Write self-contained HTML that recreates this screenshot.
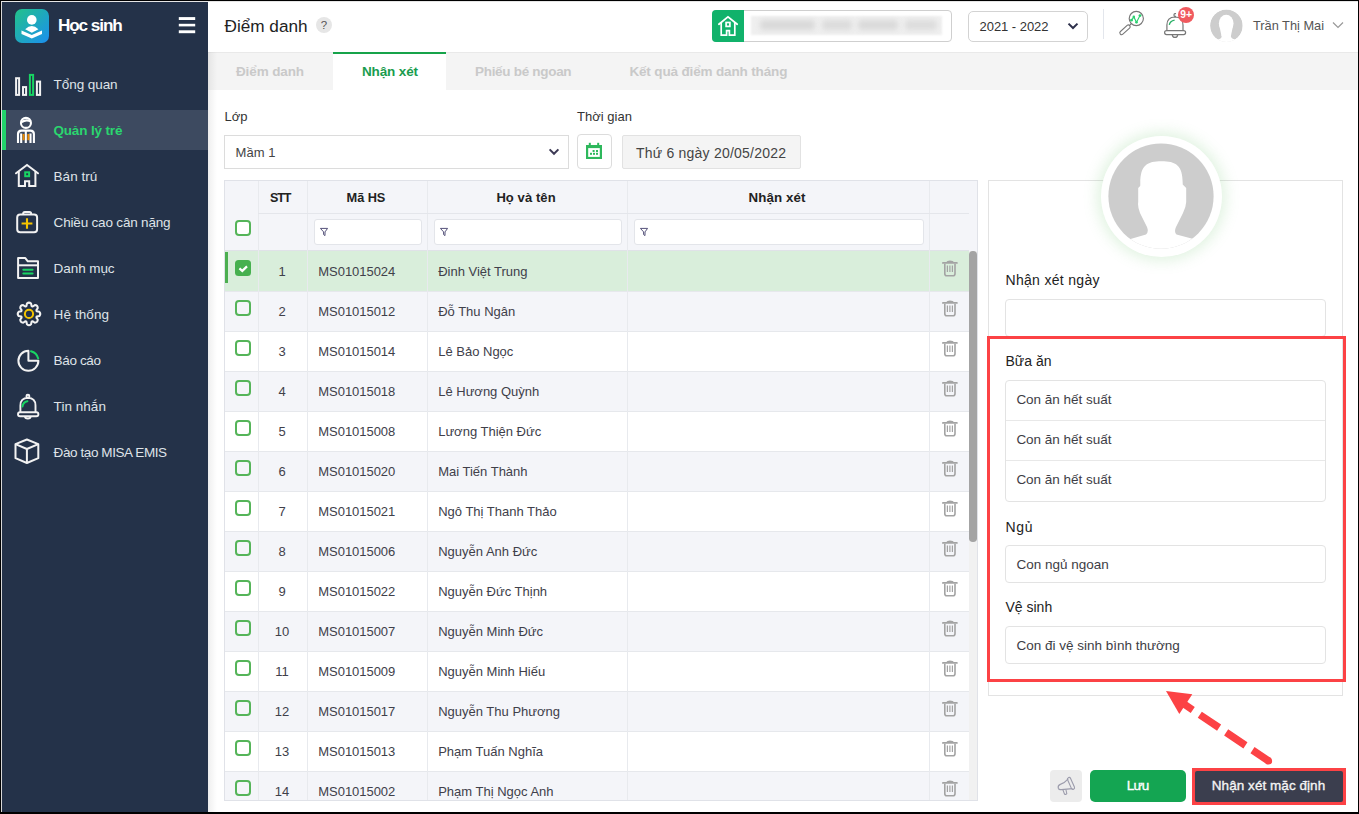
<!DOCTYPE html>
<html><head><meta charset="utf-8">
<style>
*{box-sizing:border-box;margin:0;padding:0}
html,body{width:1359px;height:814px;overflow:hidden;background:#fff;font-family:"Liberation Sans",sans-serif}
.a{position:absolute}
.t{position:absolute;white-space:nowrap;line-height:20px;height:20px}
svg{position:absolute;overflow:visible}
</style></head>
<body>
<div class="a" style="left:0px;top:0px;width:208px;height:814px;background:#243249;"></div>
<svg style="left:14px;top:8px" width="36" height="36" viewBox="0 0 36 36">
<defs><linearGradient id="lg" x1="0" y1="0" x2="1" y2="1">
<stop offset="0" stop-color="#22c28a"/><stop offset="1" stop-color="#1b8ff0"/></linearGradient></defs>
<rect x="1" y="1" width="34" height="34" rx="7" fill="url(#lg)"/>
<circle cx="17.8" cy="11.9" r="4.8" fill="#fff"/>
<path d="M11.2 21.2 Q17.8 14.8 24.4 21.2 L17.8 24.8 Z" fill="#fff"/>
<path d="M7.5 22.5 L17.8 27 L28 22.5 L28 26 L17.8 30.5 L7.5 26 Z" fill="#fff"/>
</svg>
<div class="t" style="left:57.90px;top:14.94px;font-size:17.2px;color:#fff;font-weight:bold;letter-spacing:-1.090px;">Học sinh</div>
<svg style="left:178px;top:16px" width="18" height="20">
<rect x="0.8" y="1.1" width="16.4" height="2.9" fill="#fff"/>
<rect x="0.8" y="7.8" width="16.4" height="2.6" fill="#fff"/>
<rect x="0.8" y="14.3" width="16.4" height="2.9" fill="#fff"/>
</svg>
<div class="a" style="left:2px;top:110px;width:206px;height:40px;background:#3d4a60;"></div>
<div class="a" style="left:2px;top:110px;width:4px;height:40px;background:#22d36b;"></div>
<div class="t" style="left:53.60px;top:74.72px;font-size:13.5px;color:#dfe3e8;letter-spacing:-0.069px;">Tổng quan</div>
<div class="t" style="left:53.40px;top:120.72px;font-size:13.5px;color:#2bd66f;font-weight:bold;letter-spacing:-0.152px;">Quản lý trẻ</div>
<div class="t" style="left:53.60px;top:166.72px;font-size:13.5px;color:#dfe3e8;letter-spacing:0.012px;">Bán trú</div>
<div class="t" style="left:53.60px;top:212.72px;font-size:13.5px;color:#dfe3e8;letter-spacing:-0.182px;">Chiều cao cân nặng</div>
<div class="t" style="left:53.60px;top:258.72px;font-size:13.5px;color:#dfe3e8;letter-spacing:-0.076px;">Danh mục</div>
<div class="t" style="left:53.60px;top:304.72px;font-size:13.5px;color:#dfe3e8;letter-spacing:0.101px;">Hệ thống</div>
<div class="t" style="left:53.60px;top:350.72px;font-size:13.5px;color:#dfe3e8;letter-spacing:-0.356px;">Báo cáo</div>
<div class="t" style="left:53.60px;top:396.72px;font-size:13.5px;color:#dfe3e8;letter-spacing:0.038px;">Tin nhắn</div>
<div class="t" style="left:53.60px;top:442.72px;font-size:13.5px;color:#dfe3e8;letter-spacing:-0.410px;">Đào tạo MISA EMIS</div>
<svg style="left:0;top:0" width="60" height="480" viewBox="0 0 60 480">
<g fill="none" stroke="#f2f2f2" stroke-width="2">
<rect x="16.1" y="78.2" width="3" height="16.7"/>
<rect x="23" y="87.1" width="3.1" height="7.8"/>
<rect x="36.9" y="81.6" width="3.2" height="13.3"/>
</g>
<rect x="29.9" y="74.9" width="3.2" height="20" fill="none" stroke="#18d463" stroke-width="2"/>
<!-- person -->
<g fill="none" stroke="#fff" stroke-width="2.1">
<circle cx="25.95" cy="122.9" r="5"/>
<path d="M21.6 122.3 Q25.5 119.2 30.6 121.2"/>
<path d="M18 143 L18 134 Q18 130.8 21.5 130.6 L30.5 130.6 Q33.9 130.8 33.9 134 L33.9 143"/>
<path d="M21.2 133.5 L21.2 143 M25.8 131 L25.8 143 M30.5 133.5 L30.5 143"/>
</g>
<rect x="22.6" y="134" width="1.9" height="6.2" fill="#f08c00"/>
<rect x="27.4" y="134" width="1.9" height="6.2" fill="#f08c00"/>
<!-- house -->
<g fill="none" stroke="#f2f2f2" stroke-width="2" stroke-linecap="round" stroke-linejoin="miter">
<path d="M16 173.3 L27 165 L38 173.3"/>
<path d="M18.8 171.2 L18.8 186.1 L25 186.1 L25 181.3 L29.2 181.3 L29.2 186.1 L35.4 186.1 L35.4 171.2" stroke-linecap="butt"/>
</g>
<rect x="25.2" y="172.3" width="3.9" height="3.9" fill="none" stroke="#18d463" stroke-width="2"/>
<!-- med kit -->
<g fill="none" stroke="#f2f2f2" stroke-width="2">
<rect x="17.2" y="214.5" width="19.9" height="17.7" rx="3"/>
<path d="M23.2 214.5 L23.2 213.5 Q23.2 211.9 24.8 211.9 L29.5 211.9 Q31.1 211.9 31.1 213.5 L31.1 214.5"/>
</g>
<path d="M21.6 223.5 L32.4 223.5 M27 218.3 L27 228.8" stroke="#f5c400" stroke-width="2.1"/>
<!-- folder -->
<g fill="none" stroke="#f2f2f2" stroke-width="2" stroke-linejoin="round">
<path d="M18.1 258.1 L25.3 258.1 L27.8 261.3 L38 261.3 L38 278 L18.1 278 Z"/>
<path d="M18.1 265.3 L38 265.3"/>
</g>
<path d="M23.3 269.7 L32.6 269.7 M23.3 273.6 L32.6 273.6" stroke="#18d463" stroke-width="2" stroke-linecap="round"/>
<!-- gear -->
<path d="M26.44 306.01 L26.93 303.50 Q29.00 301.70 31.07 303.50 L31.56 306.01 Q31.98 306.69 32.77 306.50 L34.89 305.09 Q37.63 305.27 37.81 308.01 L36.40 310.13 Q36.21 310.92 36.89 311.34 L39.40 311.83 Q41.20 313.90 39.40 315.97 L36.89 316.46 Q36.21 316.88 36.40 317.67 L37.81 319.79 Q37.63 322.53 34.89 322.71 L32.77 321.30 Q31.98 321.11 31.56 321.79 L31.07 324.30 Q29.00 326.10 26.93 324.30 L26.44 321.79 Q26.02 321.11 25.23 321.30 L23.11 322.71 Q20.37 322.53 20.19 319.79 L21.60 317.67 Q21.79 316.88 21.11 316.46 L18.60 315.97 Q16.80 313.90 18.60 311.83 L21.11 311.34 Q21.79 310.92 21.60 310.13 L20.19 308.01 Q20.37 305.27 23.11 305.09 L25.23 306.50 Q26.02 306.69 26.44 306.01 Z" fill="none" stroke="#f2f2f2" stroke-width="2" stroke-linejoin="round"/>
<circle cx="29" cy="313.9" r="4.1" fill="none" stroke="#f5c400" stroke-width="2"/>
<!-- pie -->
<path d="M28.4 350.8 A10 10 0 1 0 38.4 360.8 L28.4 360.8 Z" fill="none" stroke="#f2f2f2" stroke-width="2" stroke-linejoin="round"/>
<path d="M31 351.2 A10 10 0 0 1 38.2 358.4" fill="none" stroke="#18d463" stroke-width="2" stroke-linecap="round"/>
<!-- bell -->
<g fill="none" stroke="#f2f2f2" stroke-width="1.9">
<circle cx="27.9" cy="396.3" r="1.5"/>
<path d="M20.4 412.3 L20.4 405.5 Q20.4 398 27.9 397.9 Q35.5 398 35.5 405.5 L35.5 412.3"/>
<rect x="18" y="412.3" width="20.4" height="4" rx="2"/>
<path d="M25 416.5 Q25 418.5 27.9 418.5 Q30.6 418.5 30.6 416.5"/>
</g>
<path d="M22.5 406.5 Q23 402.3 27.4 401.3" fill="none" stroke="#18d463" stroke-width="2" stroke-linecap="round"/>
<!-- cube -->
<g fill="none" stroke="#f2f2f2" stroke-width="2" stroke-linejoin="round">
<path d="M26.9 439.5 L38.3 444.2 L38.3 458.2 L26.9 463 L15.5 458.2 L15.5 444.2 Z"/>
<path d="M15.5 444.2 L26.9 449 L38.3 444.2 M26.9 449 L26.9 463"/>
</g>
</svg>
<div class="t" style="left:224.60px;top:15.84px;font-size:17.2px;color:#222;letter-spacing:-0.023px;">Điểm danh</div>
<div class="a" style="left:316px;top:17px;width:16px;height:16px;border-radius:50%;background:#e6e6e6;color:#555;font-size:11.5px;line-height:16px;text-align:center">?</div>
<div class="a" style="left:208px;top:52px;width:1150px;height:38px;background:#f4f4f4;"></div>
<div class="a" style="left:208px;top:52px;width:1150px;height:1px;background:#e9e9e9;"></div>
<div class="a" style="left:333px;top:52px;width:113px;height:38px;background:#fff;"></div>
<div class="a" style="left:333px;top:52px;width:113px;height:2px;background:#16a34a;"></div>
<div class="t" style="left:236.00px;top:61.82px;font-size:13.5px;color:#c9c9c9;font-weight:bold;letter-spacing:-0.126px;">Điểm danh</div>
<div class="t" style="left:362.00px;top:61.82px;font-size:13.5px;color:#1a9c4e;font-weight:bold;letter-spacing:-0.145px;">Nhận xét</div>
<div class="t" style="left:475.00px;top:61.82px;font-size:13.5px;color:#c9c9c9;font-weight:bold;letter-spacing:-0.301px;">Phiếu bé ngoan</div>
<div class="t" style="left:629.40px;top:61.82px;font-size:13.5px;color:#c9c9c9;font-weight:bold;letter-spacing:-0.148px;">Kết quả điểm danh tháng</div>
<div class="a" style="left:711.5px;top:10px;width:240.5px;height:31.5px;background:#fff;border:1px solid #cfcfcf;border-radius:4px"></div>
<div class="a" style="left:711.5px;top:10px;width:32px;height:31.5px;background:#11b26b;border-radius:4px 0 0 4px"></div>
<svg style="left:712px;top:10px" width="32" height="32" viewBox="712 10 32 32">
<path d="M718.9 24.3 L728 16.9 L737.2 24.3" fill="none" stroke="#fff" stroke-width="1.8" stroke-linejoin="miter" stroke-linecap="round"/>
<path d="M721.2 22.3 L721.2 35.2 L726.6 35.2 L726.6 30.6 L729.4 30.6 L729.4 35.2 L734.8 35.2 L734.8 22.3" fill="none" stroke="#fff" stroke-width="1.7"/>
<rect x="726.1" y="22.5" width="3.8" height="3.9" fill="none" stroke="#fff" stroke-width="1.7"/>
</svg>
<div class="a" style="left:751px;top:15.5px;width:191px;height:19.5px;background:#efefef;filter:blur(1.2px)"></div>
<div class="a" style="left:760px;top:20px;width:55px;height:10px;background:#d9d9d9;filter:blur(2.5px);border-radius:4px"></div>
<div class="a" style="left:822px;top:20px;width:30px;height:10px;background:#dcdcdc;filter:blur(2.5px);border-radius:4px"></div>
<div class="a" style="left:858px;top:20px;width:40px;height:10px;background:#dadada;filter:blur(2.5px);border-radius:4px"></div>
<div class="a" style="left:905px;top:20px;width:32px;height:10px;background:#dddddd;filter:blur(2.5px);border-radius:4px"></div>
<div class="a" style="left:968px;top:10.5px;width:120px;height:31px;background:#fff;border:1px solid #d3d3d3;border-radius:5px"></div>
<div class="t" style="left:979.50px;top:16.80px;font-size:13px;color:#333;letter-spacing:-0.039px;">2021 - 2022</div>
<svg style="left:1066px;top:21px" width="14" height="10"><path d="M2.5 2.6 L7 7 L11.5 2.6" fill="none" stroke="#2c2f4a" stroke-width="2"/></svg>
<div class="a" style="left:1103px;top:9px;width:1px;height:30px;background:#e3e6ec;"></div>
<svg style="left:1115px;top:8px" width="32" height="30" viewBox="1115 8 32 30">
<circle cx="1136.3" cy="18.5" r="7.1" fill="none" stroke="#777" stroke-width="1.15"/>
<path d="M1131.3 23.6 L1129.4 25.6" stroke="#777" stroke-width="1.3"/>
<rect x="1118.7" y="28" width="12.6" height="3.6" rx="1.8" transform="rotate(-42 1125 29.8)" fill="none" stroke="#777" stroke-width="1.1"/>
<path d="M1131.5 20.2 L1133.8 16.9 L1136.5 22.3 L1140 15.6" fill="none" stroke="#2ad06f" stroke-width="1.1"/>
<circle cx="1131.5" cy="20.2" r="1.4" fill="#2ad06f"/><circle cx="1133.8" cy="16.9" r="1.3" fill="#2ad06f"/>
<circle cx="1136.5" cy="22.3" r="1.3" fill="#2ad06f"/><circle cx="1140" cy="15.6" r="1.4" fill="#2ad06f"/>
</svg>
<svg style="left:1160px;top:8px" width="34" height="32" viewBox="1160 8 34 32">
<path d="M1166.9 30.4 L1166.9 25 Q1166.9 17.2 1175 17 Q1183 17.2 1183 25 L1183 30.4" fill="none" stroke="#777" stroke-width="1.2"/>
<rect x="1164.6" y="30.6" width="21" height="4" rx="2" fill="none" stroke="#777" stroke-width="1.2"/>
<path d="M1172.3 34.6 Q1172.5 37.4 1175 37.4 Q1177.5 37.4 1177.7 34.6" fill="none" stroke="#777" stroke-width="1.2"/>
<path d="M1176 13.6 Q1174 13.3 1174 15 Q1174 16.6 1176 16.4" fill="none" stroke="#777" stroke-width="1.2"/>
<path d="M1169.3 24.8 Q1170 21 1174.6 20.1" fill="none" stroke="#2ab067" stroke-width="1.3"/>
</svg>
<div class="a" style="left:1178px;top:7px;width:16px;height:16px;border-radius:50%;background:#f05a5f"></div>
<div class="t" style="left:1180.33px;top:4.63px;font-size:10.3px;color:#fff;font-weight:bold;">9+</div>
<svg style="left:1205px;top:5px" width="45" height="45" viewBox="1205 5 45 45">
<defs><clipPath id="ca"><circle cx="1226.4" cy="25.8" r="16.3"/></clipPath></defs>
<g clip-path="url(#ca)">
<circle cx="1226.4" cy="25.8" r="16.3" fill="#cdcdcd"/>
<ellipse cx="1226.2" cy="23.2" rx="7.3" ry="8.5" fill="#fff"/>
<path d="M1219.1 24.5 L1233.3 24.5 L1230.9 36 L1221.5 36 Z" fill="#fff"/>
<path d="M1205 39.6 L1217 39.6 Q1222.3 39 1221.6 35 L1230.8 35 Q1230.4 39 1235.5 39.6 L1248 39.6 L1248 50 L1205 50 Z" fill="#fff"/>
</g>
</svg>
<div class="t" style="left:1253.00px;top:15.56px;font-size:12.8px;color:#555;letter-spacing:-0.012px;">Trần Thị Mai</div>
<svg style="left:1331px;top:20px" width="14" height="10"><path d="M2 2.5 L7 7.5 L12 2.5" fill="none" stroke="#999" stroke-width="1.2"/></svg>
<div class="t" style="left:224.50px;top:106.50px;font-size:13px;color:#333;letter-spacing:0.007px;">Lớp</div>
<div class="t" style="left:577.00px;top:106.50px;font-size:13px;color:#333;letter-spacing:0.028px;">Thời gian</div>
<div class="a" style="left:224px;top:135px;width:345px;height:34px;background:#fff;border:1px solid #dcdcdc"></div>
<div class="t" style="left:235.60px;top:143.10px;font-size:13px;color:#444;letter-spacing:0.067px;">Mầm 1</div>
<svg style="left:547px;top:146px" width="14" height="12"><path d="M2.6 3.4 L7 7.8 L11.4 3.4" fill="none" stroke="#3d3a55" stroke-width="2"/></svg>
<div class="a" style="left:577px;top:134px;width:35px;height:35px;background:#fff;border:1px solid #dcdcdc;border-radius:4px"></div>
<svg style="left:585px;top:142px" width="18" height="18" viewBox="585 142 18 18">
<rect x="586" y="145" width="16" height="14" fill="#2eb85c"/>
<rect x="588.2" y="148.1" width="11.6" height="8.8" fill="#fff"/>
<rect x="588.8" y="142.8" width="2" height="2.6" fill="#2eb85c"/><rect x="597.2" y="142.8" width="2" height="2.6" fill="#2eb85c"/>
<rect x="592.6" y="150" width="2" height="2" fill="#2eb85c"/><rect x="596" y="150" width="2" height="2" fill="#2eb85c"/>
<rect x="590" y="152.8" width="2" height="2" fill="#2eb85c"/><rect x="593" y="152.8" width="2" height="2" fill="#2eb85c"/><rect x="596" y="152.8" width="2" height="2" fill="#2eb85c"/>
</svg>
<div class="a" style="left:621.5px;top:135px;width:179.5px;height:34px;background:#f4f4f4;border:1px solid #e2e2e2;border-radius:2px"></div>
<div class="t" style="left:636.00px;top:142.65px;font-size:14px;color:#444;letter-spacing:0.220px;">Thứ 6 ngày 20/05/2022</div>
<div class="a" style="left:224px;top:180px;width:754px;height:621px;background:#fff;border:1px solid #e0e2e8"></div>
<div class="a" style="left:225px;top:181px;width:752px;height:70px;background:#f4f5f9;"></div>
<div class="a" style="left:225px;top:251px;width:744px;height:40px;background:#d9eedb;"></div>
<div class="a" style="left:225px;top:291px;width:744px;height:40px;background:#f4f5f9;"></div>
<div class="a" style="left:225px;top:331px;width:744px;height:40px;background:#fff;"></div>
<div class="a" style="left:225px;top:371px;width:744px;height:40px;background:#f4f5f9;"></div>
<div class="a" style="left:225px;top:411px;width:744px;height:40px;background:#fff;"></div>
<div class="a" style="left:225px;top:451px;width:744px;height:40px;background:#f4f5f9;"></div>
<div class="a" style="left:225px;top:491px;width:744px;height:40px;background:#fff;"></div>
<div class="a" style="left:225px;top:531px;width:744px;height:40px;background:#f4f5f9;"></div>
<div class="a" style="left:225px;top:571px;width:744px;height:40px;background:#fff;"></div>
<div class="a" style="left:225px;top:611px;width:744px;height:40px;background:#f4f5f9;"></div>
<div class="a" style="left:225px;top:651px;width:744px;height:40px;background:#fff;"></div>
<div class="a" style="left:225px;top:691px;width:744px;height:40px;background:#f4f5f9;"></div>
<div class="a" style="left:225px;top:731px;width:744px;height:40px;background:#fff;"></div>
<div class="a" style="left:225px;top:771px;width:744px;height:29px;background:#f4f5f9;"></div>
<div class="a" style="left:225px;top:291px;width:744px;height:1px;background:#e6e8ec;"></div>
<div class="a" style="left:225px;top:331px;width:744px;height:1px;background:#e6e8ec;"></div>
<div class="a" style="left:225px;top:371px;width:744px;height:1px;background:#e6e8ec;"></div>
<div class="a" style="left:225px;top:411px;width:744px;height:1px;background:#e6e8ec;"></div>
<div class="a" style="left:225px;top:451px;width:744px;height:1px;background:#e6e8ec;"></div>
<div class="a" style="left:225px;top:491px;width:744px;height:1px;background:#e6e8ec;"></div>
<div class="a" style="left:225px;top:531px;width:744px;height:1px;background:#e6e8ec;"></div>
<div class="a" style="left:225px;top:571px;width:744px;height:1px;background:#e6e8ec;"></div>
<div class="a" style="left:225px;top:611px;width:744px;height:1px;background:#e6e8ec;"></div>
<div class="a" style="left:225px;top:651px;width:744px;height:1px;background:#e6e8ec;"></div>
<div class="a" style="left:225px;top:691px;width:744px;height:1px;background:#e6e8ec;"></div>
<div class="a" style="left:225px;top:731px;width:744px;height:1px;background:#e6e8ec;"></div>
<div class="a" style="left:225px;top:771px;width:744px;height:1px;background:#e6e8ec;"></div>
<div class="a" style="left:225px;top:250px;width:744px;height:1px;background:#e0e2e8;"></div>
<div class="a" style="left:225px;top:252px;width:3px;height:30.5px;background:#4caf50;"></div>
<div class="a" style="left:257.5px;top:181px;width:1px;height:619px;background:#e8eaee;"></div>
<div class="a" style="left:307.0px;top:181px;width:1px;height:619px;background:#e8eaee;"></div>
<div class="a" style="left:427.0px;top:181px;width:1px;height:619px;background:#e8eaee;"></div>
<div class="a" style="left:627.0px;top:181px;width:1px;height:619px;background:#e8eaee;"></div>
<div class="a" style="left:929.0px;top:181px;width:1px;height:619px;background:#e8eaee;"></div>
<div class="a" style="left:258px;top:213px;width:711px;height:1px;background:#e4e6eb;"></div>
<div class="t" style="left:269.95px;top:187.87px;font-size:12.5px;color:#222;font-weight:bold;letter-spacing:-1.055px;">STT</div>
<div class="t" style="left:346.60px;top:187.76px;font-size:12.8px;color:#222;font-weight:bold;letter-spacing:-0.080px;">Mã HS</div>
<div class="t" style="left:496.40px;top:187.70px;font-size:13px;color:#222;font-weight:bold;letter-spacing:0.086px;">Họ và tên</div>
<div class="t" style="left:748.50px;top:187.59px;font-size:13.3px;color:#222;font-weight:bold;letter-spacing:0.119px;">Nhận xét</div>
<div class="a" style="left:313.5px;top:219px;width:108.0px;height:25.5px;background:#fff;border:1px solid #e3e5ea;border-radius:3px"></div>
<svg style="left:318.5px;top:226px" width="10" height="11" viewBox="0 0 10 11"><path d="M1.4 2.4 L8.6 2.4 L6 5.9 L6 9.6 L4.6 8.6 L4.6 5.9 Z" fill="none" stroke="#55527a" stroke-width="1" stroke-linejoin="round"/></svg>
<div class="a" style="left:433.5px;top:219px;width:188.0px;height:25.5px;background:#fff;border:1px solid #e3e5ea;border-radius:3px"></div>
<svg style="left:438.5px;top:226px" width="10" height="11" viewBox="0 0 10 11"><path d="M1.4 2.4 L8.6 2.4 L6 5.9 L6 9.6 L4.6 8.6 L4.6 5.9 Z" fill="none" stroke="#55527a" stroke-width="1" stroke-linejoin="round"/></svg>
<div class="a" style="left:633.5px;top:219px;width:290.0px;height:25.5px;background:#fff;border:1px solid #e3e5ea;border-radius:3px"></div>
<svg style="left:638.5px;top:226px" width="10" height="11" viewBox="0 0 10 11"><path d="M1.4 2.4 L8.6 2.4 L6 5.9 L6 9.6 L4.6 8.6 L4.6 5.9 Z" fill="none" stroke="#55527a" stroke-width="1" stroke-linejoin="round"/></svg>
<div class="a" style="left:235px;top:220px;width:16px;height:16px;background:#fff;border:2px solid #55b459;border-radius:4px"></div>
<div class="a" style="left:225px;top:251px;width:744px;height:550px;overflow:hidden">
<div class="a" style="left:10px;top:9px;width:16px;height:16px;background:#46b04f;border-radius:3.5px"></div>
<svg style="left:9.900000000000006px;top:9px" width="16" height="16"><path d="M4.4 8.4 L7.3 10.9 L12 6.4" fill="none" stroke="#fff" stroke-width="2.2"/></svg>
<svg style="left:716px;top:8px" width="18" height="18" viewBox="941 259 18 18">
<path d="M946.6 262 Q946.6 260.4 950 260.4 Q953.6 260.4 953.6 262" fill="#a3a3a3"/>
<rect x="942" y="262" width="15.8" height="1.8" rx="0.9" fill="#a3a3a3"/>
<path d="M944.8 263.8 L944.8 273.8 Q944.8 275.8 946.8 275.8 L953 275.8 Q955 275.8 955 273.8 L955 263.8" fill="none" stroke="#a3a3a3" stroke-width="1.6"/>
<path d="M947.4 265.4 L947.4 272 M949.9 265.4 L949.9 272 M952.4 265.4 L952.4 272" stroke="#a3a3a3" stroke-width="1.2"/>
</svg>
<div class="a" style="left:9.900000000000006px;top:49px;width:16px;height:16px;background:transparent;border:2px solid #55b459;border-radius:4px"></div>
<svg style="left:716px;top:48px" width="18" height="18" viewBox="941 299 18 18">
<path d="M946.6 302 Q946.6 300.4 950 300.4 Q953.6 300.4 953.6 302" fill="#a3a3a3"/>
<rect x="942" y="302" width="15.8" height="1.8" rx="0.9" fill="#a3a3a3"/>
<path d="M944.8 303.8 L944.8 313.8 Q944.8 315.8 946.8 315.8 L953 315.8 Q955 315.8 955 313.8 L955 303.8" fill="none" stroke="#a3a3a3" stroke-width="1.6"/>
<path d="M947.4 305.4 L947.4 312 M949.9 305.4 L949.9 312 M952.4 305.4 L952.4 312" stroke="#a3a3a3" stroke-width="1.2"/>
</svg>
<div class="a" style="left:9.900000000000006px;top:89px;width:16px;height:16px;background:transparent;border:2px solid #55b459;border-radius:4px"></div>
<svg style="left:716px;top:88px" width="18" height="18" viewBox="941 339 18 18">
<path d="M946.6 342 Q946.6 340.4 950 340.4 Q953.6 340.4 953.6 342" fill="#a3a3a3"/>
<rect x="942" y="342" width="15.8" height="1.8" rx="0.9" fill="#a3a3a3"/>
<path d="M944.8 343.8 L944.8 353.8 Q944.8 355.8 946.8 355.8 L953 355.8 Q955 355.8 955 353.8 L955 343.8" fill="none" stroke="#a3a3a3" stroke-width="1.6"/>
<path d="M947.4 345.4 L947.4 352 M949.9 345.4 L949.9 352 M952.4 345.4 L952.4 352" stroke="#a3a3a3" stroke-width="1.2"/>
</svg>
<div class="a" style="left:9.900000000000006px;top:129px;width:16px;height:16px;background:transparent;border:2px solid #55b459;border-radius:4px"></div>
<svg style="left:716px;top:128px" width="18" height="18" viewBox="941 379 18 18">
<path d="M946.6 382 Q946.6 380.4 950 380.4 Q953.6 380.4 953.6 382" fill="#a3a3a3"/>
<rect x="942" y="382" width="15.8" height="1.8" rx="0.9" fill="#a3a3a3"/>
<path d="M944.8 383.8 L944.8 393.8 Q944.8 395.8 946.8 395.8 L953 395.8 Q955 395.8 955 393.8 L955 383.8" fill="none" stroke="#a3a3a3" stroke-width="1.6"/>
<path d="M947.4 385.4 L947.4 392 M949.9 385.4 L949.9 392 M952.4 385.4 L952.4 392" stroke="#a3a3a3" stroke-width="1.2"/>
</svg>
<div class="a" style="left:9.900000000000006px;top:169px;width:16px;height:16px;background:transparent;border:2px solid #55b459;border-radius:4px"></div>
<svg style="left:716px;top:168px" width="18" height="18" viewBox="941 419 18 18">
<path d="M946.6 422 Q946.6 420.4 950 420.4 Q953.6 420.4 953.6 422" fill="#a3a3a3"/>
<rect x="942" y="422" width="15.8" height="1.8" rx="0.9" fill="#a3a3a3"/>
<path d="M944.8 423.8 L944.8 433.8 Q944.8 435.8 946.8 435.8 L953 435.8 Q955 435.8 955 433.8 L955 423.8" fill="none" stroke="#a3a3a3" stroke-width="1.6"/>
<path d="M947.4 425.4 L947.4 432 M949.9 425.4 L949.9 432 M952.4 425.4 L952.4 432" stroke="#a3a3a3" stroke-width="1.2"/>
</svg>
<div class="a" style="left:9.900000000000006px;top:209px;width:16px;height:16px;background:transparent;border:2px solid #55b459;border-radius:4px"></div>
<svg style="left:716px;top:208px" width="18" height="18" viewBox="941 459 18 18">
<path d="M946.6 462 Q946.6 460.4 950 460.4 Q953.6 460.4 953.6 462" fill="#a3a3a3"/>
<rect x="942" y="462" width="15.8" height="1.8" rx="0.9" fill="#a3a3a3"/>
<path d="M944.8 463.8 L944.8 473.8 Q944.8 475.8 946.8 475.8 L953 475.8 Q955 475.8 955 473.8 L955 463.8" fill="none" stroke="#a3a3a3" stroke-width="1.6"/>
<path d="M947.4 465.4 L947.4 472 M949.9 465.4 L949.9 472 M952.4 465.4 L952.4 472" stroke="#a3a3a3" stroke-width="1.2"/>
</svg>
<div class="a" style="left:9.900000000000006px;top:249px;width:16px;height:16px;background:transparent;border:2px solid #55b459;border-radius:4px"></div>
<svg style="left:716px;top:248px" width="18" height="18" viewBox="941 499 18 18">
<path d="M946.6 502 Q946.6 500.4 950 500.4 Q953.6 500.4 953.6 502" fill="#a3a3a3"/>
<rect x="942" y="502" width="15.8" height="1.8" rx="0.9" fill="#a3a3a3"/>
<path d="M944.8 503.8 L944.8 513.8 Q944.8 515.8 946.8 515.8 L953 515.8 Q955 515.8 955 513.8 L955 503.8" fill="none" stroke="#a3a3a3" stroke-width="1.6"/>
<path d="M947.4 505.4 L947.4 512 M949.9 505.4 L949.9 512 M952.4 505.4 L952.4 512" stroke="#a3a3a3" stroke-width="1.2"/>
</svg>
<div class="a" style="left:9.900000000000006px;top:289px;width:16px;height:16px;background:transparent;border:2px solid #55b459;border-radius:4px"></div>
<svg style="left:716px;top:288px" width="18" height="18" viewBox="941 539 18 18">
<path d="M946.6 542 Q946.6 540.4 950 540.4 Q953.6 540.4 953.6 542" fill="#a3a3a3"/>
<rect x="942" y="542" width="15.8" height="1.8" rx="0.9" fill="#a3a3a3"/>
<path d="M944.8 543.8 L944.8 553.8 Q944.8 555.8 946.8 555.8 L953 555.8 Q955 555.8 955 553.8 L955 543.8" fill="none" stroke="#a3a3a3" stroke-width="1.6"/>
<path d="M947.4 545.4 L947.4 552 M949.9 545.4 L949.9 552 M952.4 545.4 L952.4 552" stroke="#a3a3a3" stroke-width="1.2"/>
</svg>
<div class="a" style="left:9.900000000000006px;top:329px;width:16px;height:16px;background:transparent;border:2px solid #55b459;border-radius:4px"></div>
<svg style="left:716px;top:328px" width="18" height="18" viewBox="941 579 18 18">
<path d="M946.6 582 Q946.6 580.4 950 580.4 Q953.6 580.4 953.6 582" fill="#a3a3a3"/>
<rect x="942" y="582" width="15.8" height="1.8" rx="0.9" fill="#a3a3a3"/>
<path d="M944.8 583.8 L944.8 593.8 Q944.8 595.8 946.8 595.8 L953 595.8 Q955 595.8 955 593.8 L955 583.8" fill="none" stroke="#a3a3a3" stroke-width="1.6"/>
<path d="M947.4 585.4 L947.4 592 M949.9 585.4 L949.9 592 M952.4 585.4 L952.4 592" stroke="#a3a3a3" stroke-width="1.2"/>
</svg>
<div class="a" style="left:9.900000000000006px;top:369px;width:16px;height:16px;background:transparent;border:2px solid #55b459;border-radius:4px"></div>
<svg style="left:716px;top:368px" width="18" height="18" viewBox="941 619 18 18">
<path d="M946.6 622 Q946.6 620.4 950 620.4 Q953.6 620.4 953.6 622" fill="#a3a3a3"/>
<rect x="942" y="622" width="15.8" height="1.8" rx="0.9" fill="#a3a3a3"/>
<path d="M944.8 623.8 L944.8 633.8 Q944.8 635.8 946.8 635.8 L953 635.8 Q955 635.8 955 633.8 L955 623.8" fill="none" stroke="#a3a3a3" stroke-width="1.6"/>
<path d="M947.4 625.4 L947.4 632 M949.9 625.4 L949.9 632 M952.4 625.4 L952.4 632" stroke="#a3a3a3" stroke-width="1.2"/>
</svg>
<div class="a" style="left:9.900000000000006px;top:409px;width:16px;height:16px;background:transparent;border:2px solid #55b459;border-radius:4px"></div>
<svg style="left:716px;top:408px" width="18" height="18" viewBox="941 659 18 18">
<path d="M946.6 662 Q946.6 660.4 950 660.4 Q953.6 660.4 953.6 662" fill="#a3a3a3"/>
<rect x="942" y="662" width="15.8" height="1.8" rx="0.9" fill="#a3a3a3"/>
<path d="M944.8 663.8 L944.8 673.8 Q944.8 675.8 946.8 675.8 L953 675.8 Q955 675.8 955 673.8 L955 663.8" fill="none" stroke="#a3a3a3" stroke-width="1.6"/>
<path d="M947.4 665.4 L947.4 672 M949.9 665.4 L949.9 672 M952.4 665.4 L952.4 672" stroke="#a3a3a3" stroke-width="1.2"/>
</svg>
<div class="a" style="left:9.900000000000006px;top:449px;width:16px;height:16px;background:transparent;border:2px solid #55b459;border-radius:4px"></div>
<svg style="left:716px;top:448px" width="18" height="18" viewBox="941 699 18 18">
<path d="M946.6 702 Q946.6 700.4 950 700.4 Q953.6 700.4 953.6 702" fill="#a3a3a3"/>
<rect x="942" y="702" width="15.8" height="1.8" rx="0.9" fill="#a3a3a3"/>
<path d="M944.8 703.8 L944.8 713.8 Q944.8 715.8 946.8 715.8 L953 715.8 Q955 715.8 955 713.8 L955 703.8" fill="none" stroke="#a3a3a3" stroke-width="1.6"/>
<path d="M947.4 705.4 L947.4 712 M949.9 705.4 L949.9 712 M952.4 705.4 L952.4 712" stroke="#a3a3a3" stroke-width="1.2"/>
</svg>
<div class="a" style="left:9.900000000000006px;top:489px;width:16px;height:16px;background:transparent;border:2px solid #55b459;border-radius:4px"></div>
<svg style="left:716px;top:488px" width="18" height="18" viewBox="941 739 18 18">
<path d="M946.6 742 Q946.6 740.4 950 740.4 Q953.6 740.4 953.6 742" fill="#a3a3a3"/>
<rect x="942" y="742" width="15.8" height="1.8" rx="0.9" fill="#a3a3a3"/>
<path d="M944.8 743.8 L944.8 753.8 Q944.8 755.8 946.8 755.8 L953 755.8 Q955 755.8 955 753.8 L955 743.8" fill="none" stroke="#a3a3a3" stroke-width="1.6"/>
<path d="M947.4 745.4 L947.4 752 M949.9 745.4 L949.9 752 M952.4 745.4 L952.4 752" stroke="#a3a3a3" stroke-width="1.2"/>
</svg>
<div class="a" style="left:9.900000000000006px;top:529px;width:16px;height:16px;background:transparent;border:2px solid #55b459;border-radius:4px"></div>
<svg style="left:716px;top:528px" width="18" height="18" viewBox="941 779 18 18">
<path d="M946.6 782 Q946.6 780.4 950 780.4 Q953.6 780.4 953.6 782" fill="#a3a3a3"/>
<rect x="942" y="782" width="15.8" height="1.8" rx="0.9" fill="#a3a3a3"/>
<path d="M944.8 783.8 L944.8 793.8 Q944.8 795.8 946.8 795.8 L953 795.8 Q955 795.8 955 793.8 L955 783.8" fill="none" stroke="#a3a3a3" stroke-width="1.6"/>
<path d="M947.4 785.4 L947.4 792 M949.9 785.4 L949.9 792 M952.4 785.4 L952.4 792" stroke="#a3a3a3" stroke-width="1.2"/>
</svg>
<div class="t" style="left:53.38px;top:11.10px;font-size:13px;color:#40404a;">1</div>
<div class="t" style="left:93.30px;top:11.10px;font-size:13px;color:#40404a;letter-spacing:-0.038px;">MS01015024</div>
<div class="t" style="left:213.20px;top:11.10px;font-size:13px;color:#40404a;">Đinh Việt Trung</div>
<div class="t" style="left:53.38px;top:51.10px;font-size:13px;color:#40404a;">2</div>
<div class="t" style="left:93.30px;top:51.10px;font-size:13px;color:#40404a;letter-spacing:-0.038px;">MS01015012</div>
<div class="t" style="left:213.20px;top:51.10px;font-size:13px;color:#40404a;">Đỗ Thu Ngân</div>
<div class="t" style="left:53.38px;top:91.10px;font-size:13px;color:#40404a;">3</div>
<div class="t" style="left:93.30px;top:91.10px;font-size:13px;color:#40404a;letter-spacing:-0.038px;">MS01015014</div>
<div class="t" style="left:213.20px;top:91.10px;font-size:13px;color:#40404a;">Lê Bảo Ngọc</div>
<div class="t" style="left:53.38px;top:131.10px;font-size:13px;color:#40404a;">4</div>
<div class="t" style="left:93.30px;top:131.10px;font-size:13px;color:#40404a;letter-spacing:-0.038px;">MS01015018</div>
<div class="t" style="left:213.20px;top:131.10px;font-size:13px;color:#40404a;">Lê Hương Quỳnh</div>
<div class="t" style="left:53.38px;top:171.10px;font-size:13px;color:#40404a;">5</div>
<div class="t" style="left:93.30px;top:171.10px;font-size:13px;color:#40404a;letter-spacing:-0.038px;">MS01015008</div>
<div class="t" style="left:213.20px;top:171.10px;font-size:13px;color:#40404a;">Lương Thiện Đức</div>
<div class="t" style="left:53.38px;top:211.10px;font-size:13px;color:#40404a;">6</div>
<div class="t" style="left:93.30px;top:211.10px;font-size:13px;color:#40404a;letter-spacing:-0.038px;">MS01015020</div>
<div class="t" style="left:213.20px;top:211.10px;font-size:13px;color:#40404a;">Mai Tiến Thành</div>
<div class="t" style="left:53.38px;top:251.10px;font-size:13px;color:#40404a;">7</div>
<div class="t" style="left:93.30px;top:251.10px;font-size:13px;color:#40404a;letter-spacing:-0.038px;">MS01015021</div>
<div class="t" style="left:213.20px;top:251.10px;font-size:13px;color:#40404a;">Ngô Thị Thanh Thảo</div>
<div class="t" style="left:53.38px;top:291.10px;font-size:13px;color:#40404a;">8</div>
<div class="t" style="left:93.30px;top:291.10px;font-size:13px;color:#40404a;letter-spacing:-0.038px;">MS01015006</div>
<div class="t" style="left:213.20px;top:291.10px;font-size:13px;color:#40404a;">Nguyễn Anh Đức</div>
<div class="t" style="left:53.38px;top:331.10px;font-size:13px;color:#40404a;">9</div>
<div class="t" style="left:93.30px;top:331.10px;font-size:13px;color:#40404a;letter-spacing:-0.038px;">MS01015022</div>
<div class="t" style="left:213.20px;top:331.10px;font-size:13px;color:#40404a;">Nguyễn Đức Thịnh</div>
<div class="t" style="left:49.77px;top:371.10px;font-size:13px;color:#40404a;">10</div>
<div class="t" style="left:93.30px;top:371.10px;font-size:13px;color:#40404a;letter-spacing:-0.038px;">MS01015007</div>
<div class="t" style="left:213.20px;top:371.10px;font-size:13px;color:#40404a;">Nguyễn Minh Đức</div>
<div class="t" style="left:50.25px;top:411.10px;font-size:13px;color:#40404a;">11</div>
<div class="t" style="left:93.30px;top:411.10px;font-size:13px;color:#40404a;letter-spacing:-0.038px;">MS01015009</div>
<div class="t" style="left:213.20px;top:411.10px;font-size:13px;color:#40404a;">Nguyễn Minh Hiếu</div>
<div class="t" style="left:49.77px;top:451.10px;font-size:13px;color:#40404a;">12</div>
<div class="t" style="left:93.30px;top:451.10px;font-size:13px;color:#40404a;letter-spacing:-0.038px;">MS01015017</div>
<div class="t" style="left:213.20px;top:451.10px;font-size:13px;color:#40404a;">Nguyễn Thu Phương</div>
<div class="t" style="left:49.77px;top:491.10px;font-size:13px;color:#40404a;">13</div>
<div class="t" style="left:93.30px;top:491.10px;font-size:13px;color:#40404a;letter-spacing:-0.038px;">MS01015013</div>
<div class="t" style="left:213.20px;top:491.10px;font-size:13px;color:#40404a;">Phạm Tuấn Nghĩa</div>
<div class="t" style="left:49.77px;top:531.10px;font-size:13px;color:#40404a;">14</div>
<div class="t" style="left:93.30px;top:531.10px;font-size:13px;color:#40404a;letter-spacing:-0.038px;">MS01015002</div>
<div class="t" style="left:213.20px;top:531.10px;font-size:13px;color:#40404a;">Phạm Thị Ngọc Anh</div>
</div>
<div class="a" style="left:969px;top:251px;width:8px;height:549px;background:#f1f1f1;"></div>
<div class="a" style="left:969.2px;top:251px;width:7.7px;height:291px;background:#a4a4a4;border-radius:3.8px"></div>
<div class="a" style="left:988px;top:180px;width:355px;height:516px;background:#fff;border:1px solid #e3e3e3"></div>
<div class="a" style="left:1101px;top:136px;width:121px;height:121px;border-radius:50%;background:#fff;box-shadow:0 0 14px 4px rgba(120,200,120,0.22)"></div>
<svg style="left:1101px;top:136px" width="121" height="121" viewBox="1101 136 121 121">
<defs><clipPath id="cb"><circle cx="1161" cy="196.2" r="52.6"/></clipPath></defs>
<circle cx="1161" cy="196.2" r="52.6" fill="#cdcdcd"/>
<path clip-path="url(#cb)" d="M1140.3 184.5 C1140 165 1147 161.2 1161.5 161.2 C1176 161.2 1183 165 1182.7 184.5 L1184.2 186 L1186.2 188 L1186.2 202 Q1186 207 1183 213 L1176 227 Q1173.8 232 1176.5 234.5 L1191.5 238.5 L1250 250 L1250 260 L1070 260 L1070 250 L1130.5 239 L1146 234.5 Q1149 232 1147 227 L1140 213 Q1137.5 207 1138.2 202 L1138.2 188 L1140.2 186 Z" fill="#fff"/>
</svg>
<div class="t" style="left:1005.50px;top:270.15px;font-size:14px;color:#222;letter-spacing:0.310px;">Nhận xét ngày</div>
<div class="a" style="left:1005px;top:299px;width:320.5px;height:38px;background:#fff;border:1px solid #e3e3e3;border-radius:4px"></div>
<div class="t" style="left:1005.50px;top:351.15px;font-size:14px;color:#222;">Bữa ăn</div>
<div class="a" style="left:1005px;top:380px;width:321px;height:122px;background:#fff;border:1px solid #e3e3e3;border-radius:4px"></div>
<div class="a" style="left:1006px;top:420px;width:319px;height:1px;background:#e8e8e8;"></div>
<div class="a" style="left:1006px;top:460px;width:319px;height:1px;background:#e8e8e8;"></div>
<div class="t" style="left:1016.40px;top:389.52px;font-size:13.5px;color:#3d3d45;letter-spacing:-0.023px;">Con ăn hết suất</div>
<div class="t" style="left:1016.40px;top:429.52px;font-size:13.5px;color:#3d3d45;letter-spacing:-0.023px;">Con ăn hết suất</div>
<div class="t" style="left:1016.40px;top:469.52px;font-size:13.5px;color:#3d3d45;letter-spacing:-0.023px;">Con ăn hết suất</div>
<div class="t" style="left:1005.50px;top:516.55px;font-size:14px;color:#222;letter-spacing:0.658px;">Ngủ</div>
<div class="a" style="left:1005px;top:545px;width:321px;height:38px;background:#fff;border:1px solid #e3e3e3;border-radius:4px"></div>
<div class="t" style="left:1016.40px;top:554.82px;font-size:13.5px;color:#3d3d45;">Con ngủ ngoan</div>
<div class="t" style="left:1005.50px;top:596.95px;font-size:14px;color:#222;">Vệ sinh</div>
<div class="a" style="left:1005px;top:626px;width:321px;height:38px;background:#fff;border:1px solid #e3e3e3;border-radius:4px"></div>
<div class="t" style="left:1016.40px;top:635.82px;font-size:13.5px;color:#3d3d45;">Con đi vệ sinh bình thường</div>
<div class="a" style="left:987px;top:336px;width:359px;height:346px;background:transparent;border:3px solid #fc4245"></div>
<div class="a" style="left:1050px;top:770px;width:32px;height:32px;background:#ececec;border-radius:4px"></div>
<svg style="left:1050px;top:770px" width="32" height="32" viewBox="1050 770 32 32">
<rect x="1069.35" y="777.1" width="3.3" height="12.6" rx="1.6" transform="rotate(-24 1071 783.4)" fill="none" stroke="#9c9cac" stroke-width="1.1"/>
<path d="M1068.2 778.8 Q1064.5 783 1060.3 784.4 Q1057.6 785.6 1058.3 788.2 Q1059 790 1061.2 789.6 L1072.5 788.6" fill="none" stroke="#9c9cac" stroke-width="1.15" stroke-linejoin="round"/>
<path d="M1062.9 789.8 L1064.4 793.9 Q1065 794.9 1066 794.3 L1066.8 793.5 L1065.9 789.5" fill="none" stroke="#9c9cac" stroke-width="1.1" stroke-linejoin="round"/>
</svg>
<div class="a" style="left:1090px;top:770px;width:96px;height:32px;background:#14a552;border-radius:5px"></div>
<div class="t" style="left:1126.85px;top:776.12px;font-size:13.5px;color:#fff;letter-spacing:-0.877px;-webkit-text-stroke:0.35px #fff;">Lưu</div>
<div class="a" style="left:1192px;top:768px;width:154px;height:37px;background:#fc4245;"></div>
<div class="a" style="left:1195.3px;top:771.1px;width:147.7px;height:30.6px;background:#3b3e4e;border-radius:2px"></div>
<div class="t" style="left:1211.80px;top:776.22px;font-size:13.5px;color:#f4f4f4;letter-spacing:0.052px;-webkit-text-stroke:0.35px #f4f4f4;">Nhận xét mặc định</div>
<svg style="left:1150px;top:680px" width="130" height="90" viewBox="1150 680 130 90">
<path d="M1268.5 760.9 L1184.4 704.3" fill="none" stroke="#fc4245" stroke-width="7.3" stroke-dasharray="19.3 8.5 23.25 8.5 23.25 8.5 40" stroke-linecap="butt"/>
<path d="M1166 691 L1192.3 694.2 L1179.3 714 Z" fill="#fc4245"/>
<circle cx="1268.5" cy="760.9" r="3.65" fill="#fc4245"/>
</svg>
<div class="a" style="left:208px;top:52px;width:9px;height:760px;background:linear-gradient(90deg,rgba(0,0,0,0.075),rgba(0,0,0,0.045) 30%,rgba(0,0,0,0))"></div>
<div class="a" style="left:0px;top:0px;width:1359px;height:1px;background:#000;"></div>
<div class="a" style="left:0px;top:0px;width:1px;height:814px;background:#000;"></div>
<div class="a" style="left:1358px;top:0px;width:1px;height:814px;background:#000;"></div>
<div class="a" style="left:0px;top:812px;width:1359px;height:2px;background:#000;"></div>
<div class="a" style="left:1px;top:1px;width:1px;height:811px;background:#d8d8d8;"></div>
<div class="a" style="left:1px;top:1px;width:1357px;height:1px;background:#e6e6e6;"></div>
</body></html>
